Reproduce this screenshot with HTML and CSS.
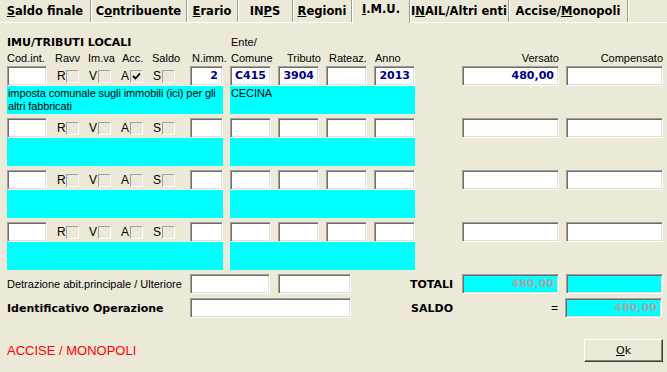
FILE: index.html
```html
<!DOCTYPE html>
<html lang="it">
<head>
    <meta charset="UTF-8">
    <title>F24 - I.M.U.</title>
    <link rel="stylesheet" href="styles.css">
</head>
<body>
    <nav class="tabs">
        <div class="tab"><u>S</u>aldo finale</div>
        <div class="tab">C<u>o</u>ntribuente</div>
        <div class="tab"><u>E</u>rario</div>
        <div class="tab">IN<u>P</u>S</div>
        <div class="tab"><u>R</u>egioni</div>
        <div class="tab active"><u>I</u>.M.U.</div>
        <div class="tab">I<u>N</u>AIL/Altri enti</div>
        <div class="tab">Accise/<u>M</u>onopoli</div>
    </nav>

    <main class="sheet">
        <div class="title-row">
            <span class="section-title">IMU/TRIBUTI LOCALI</span>
            <span>Ente/</span>
        </div>
        <div class="labels">
            <span class="l-cod">Cod.int.</span>
            <span class="l-ravv">Ravv</span>
            <span class="l-imva">Im.va</span>
            <span class="l-acc">Acc.</span>
            <span class="l-saldo">Saldo</span>
            <span class="l-nimm">N.imm.</span>
            <span class="l-com">Comune</span>
            <span class="l-trib">Tributo</span>
            <span class="l-rat">Rateaz.</span>
            <span class="l-anno">Anno</span>
            <span class="l-money">Versato</span>
            <span class="l-money gap">Compensato</span>
        </div>

        <!-- riga 1 -->
        <div class="entry">
            <div class="left">
                <div class="line">
                    <div class="field w-cod"></div>
                    <div class="checks">
                        <span class="chk"><span class="k">R</span><span class="box"></span></span>
                        <span class="chk"><span class="k">V</span><span class="box"></span></span>
                        <span class="chk"><span class="k">A</span><span class="box"><svg width="9" height="9" viewBox="0 0 9 9"><path d="M1 4 L3.5 6.5 L8 1.5" fill="none" stroke="#000" stroke-width="1.8"/></svg></span></span>
                        <span class="chk"><span class="k">S</span><span class="box"></span></span>
                    </div>
                    <div class="field w-nimm val">2</div>
                </div>
                <div class="desc">imposta comunale sugli immobili (ici) per gli altri fabbricati</div>
            </div>
            <div class="mid">
                <div class="line">
                    <div class="field val">C415</div>
                    <div class="field val">3904</div>
                    <div class="field"></div>
                    <div class="field val">2013</div>
                </div>
                <div class="desc">CECINA</div>
            </div>
            <div class="money first"><div class="field val">480,00</div></div>
            <div class="money"><div class="field"></div></div>
        </div>

        <!-- riga 2 -->
        <div class="entry">
            <div class="left">
                <div class="line">
                    <div class="field w-cod"></div>
                    <div class="checks">
                        <span class="chk"><span class="k">R</span><span class="box"></span></span>
                        <span class="chk"><span class="k">V</span><span class="box"></span></span>
                        <span class="chk"><span class="k">A</span><span class="box"></span></span>
                        <span class="chk"><span class="k">S</span><span class="box"></span></span>
                    </div>
                    <div class="field w-nimm"></div>
                </div>
                <div class="desc"></div>
            </div>
            <div class="mid">
                <div class="line">
                    <div class="field"></div>
                    <div class="field"></div>
                    <div class="field"></div>
                    <div class="field"></div>
                </div>
                <div class="desc"></div>
            </div>
            <div class="money first"><div class="field"></div></div>
            <div class="money"><div class="field"></div></div>
        </div>

        <!-- riga 3 -->
        <div class="entry">
            <div class="left">
                <div class="line">
                    <div class="field w-cod"></div>
                    <div class="checks">
                        <span class="chk"><span class="k">R</span><span class="box"></span></span>
                        <span class="chk"><span class="k">V</span><span class="box"></span></span>
                        <span class="chk"><span class="k">A</span><span class="box"></span></span>
                        <span class="chk"><span class="k">S</span><span class="box"></span></span>
                    </div>
                    <div class="field w-nimm"></div>
                </div>
                <div class="desc"></div>
            </div>
            <div class="mid">
                <div class="line">
                    <div class="field"></div>
                    <div class="field"></div>
                    <div class="field"></div>
                    <div class="field"></div>
                </div>
                <div class="desc"></div>
            </div>
            <div class="money first"><div class="field"></div></div>
            <div class="money"><div class="field"></div></div>
        </div>

        <!-- riga 4 -->
        <div class="entry">
            <div class="left">
                <div class="line">
                    <div class="field w-cod"></div>
                    <div class="checks">
                        <span class="chk"><span class="k">R</span><span class="box"></span></span>
                        <span class="chk"><span class="k">V</span><span class="box"></span></span>
                        <span class="chk"><span class="k">A</span><span class="box"></span></span>
                        <span class="chk"><span class="k">S</span><span class="box"></span></span>
                    </div>
                    <div class="field w-nimm"></div>
                </div>
                <div class="desc"></div>
            </div>
            <div class="mid">
                <div class="line">
                    <div class="field"></div>
                    <div class="field"></div>
                    <div class="field"></div>
                    <div class="field"></div>
                </div>
                <div class="desc"></div>
            </div>
            <div class="money first"><div class="field"></div></div>
            <div class="money"><div class="field"></div></div>
        </div>

        <div class="extra">
            <div class="row">
                <span class="row-label">Detrazione abit.principale / Ulteriore</span>
                <div class="field w-detr"></div>
                <div class="field w-ult"></div>
                <span class="tot-label">TOTALI</span>
                <div class="field w-money cyan dim">480,00</div>
                <div class="field w-money cyan next"></div>
            </div>
            <div class="row">
                <span class="row-label strong">Identificativo Operazione</span>
                <div class="field w-ident"></div>
                <span class="tot-label">SALDO</span>
                <span class="equals">=</span>
                <div class="field w-money cyan dim next">480,00</div>
            </div>
        </div>

        <div class="footer">
            <span class="accise">ACCISE / MONOPOLI</span>
            <button class="btn"><u>O</u>k</button>
        </div>
    </main>
</body>
</html>
```

FILE: styles.css
```css
body {
    margin: 0;
    width: 667px;
    height: 372px;
    overflow: hidden;
    background: #ece9d8;
    color: #000;
    font-family: "Liberation Sans", Arial, sans-serif;
    font-size: 11px;
}

/* linguette */
.tabs {
    display: grid;
    grid-template-columns: 91px 96px 51px 55px 59px 58px 99px 119px;
    height: 22px;
    border-bottom: 1px solid #fff;
    font-family: "DejaVu Sans", sans-serif;
    font-weight: bold;
    font-size: 11.5px;
}
.tab {
    line-height: 22px;
    text-align: center;
    white-space: nowrap;
    border-right: 1px solid #9d9d9d;
    box-shadow: 1px 0 0 #fff;
}
.tab.active {
    margin-bottom: -1px;
    line-height: 18px;
    background: #ece9d8;
    border-left: 1px solid #fff;
}

/* intestazione */
.sheet {
    padding: 11px 4px 0 7px;
}
.title-row,
.labels {
    display: flex;
    align-items: center;
    height: 16px;
    white-space: nowrap;
}
.section-title {
    width: 224px;
    font-family: "DejaVu Sans", sans-serif;
    font-weight: bold;
}
.l-cod { width: 48px; }
.l-ravv { width: 33px; }
.l-imva { width: 34px; }
.l-acc { width: 30px; }
.l-saldo { width: 40px; }
.l-nimm { width: 39px; }
.l-com { width: 56px; }
.l-trib { width: 42px; }
.l-rat { width: 46px; }
.l-anno { width: 87px; }
.l-money {
    width: 97px;
    text-align: right;
}
.l-money.gap {
    margin-left: 7px;
}

/* campi */
.field {
    box-sizing: border-box;
    height: 20px;
    background: #fff;
    border: 1px solid;
    border-color: #a0a0a0 #fff #fff #a0a0a0;
    box-shadow: inset 1px 1px 0 #6e6e6e, inset -1px -1px 0 #e2dfd0;
}
.val {
    padding-right: 4px;
    text-align: right;
    line-height: 17px;
    color: #000080;
    font-family: "DejaVu Sans", sans-serif;
    font-weight: bold;
}
.cyan {
    background: #0ff;
}
.dim {
    padding-right: 4px;
    text-align: right;
    line-height: 17px;
    color: #a8a8a8;
    font-family: "DejaVu Sans", sans-serif;
    font-weight: bold;
}

/* righe tributo */
.entry {
    display: flex;
    margin-bottom: 4px;
}
.left {
    width: 216px;
}
.mid {
    width: 185px;
    margin-left: 7px;
}
.money {
    width: 97px;
    margin-left: 7px;
}
.money.first {
    margin-left: 47px;
}
.line {
    display: flex;
    align-items: center;
    height: 20px;
}
.mid .line {
    gap: 7px;
}
.mid .field {
    width: 41px;
}
.w-cod { width: 40px; }
.w-nimm {
    width: 33px;
    margin-left: auto;
}
.checks {
    display: flex;
    margin-left: 10px;
}
.chk {
    display: flex;
    align-items: center;
    width: 32px;
    font-size: 12px;
}
.k {
    width: 9px;
}
.box {
    box-sizing: border-box;
    display: flex;
    align-items: center;
    justify-content: center;
    width: 13px;
    height: 13px;
    border: 1px solid;
    border-color: #a0a0a0 #fff #fff #a0a0a0;
}
.desc {
    box-sizing: border-box;
    height: 28px;
    padding: 1px 0 0 1px;
    line-height: 13px;
    letter-spacing: -0.1px;
    background: #0ff;
}

/* detrazioni e totali */
.extra {
    margin-top: 4px;
}
.row {
    display: flex;
    align-items: center;
    height: 20px;
    margin-bottom: 4px;
    white-space: nowrap;
}
.row-label {
    width: 183px;
}
.row-label.strong {
    font-family: "DejaVu Sans", sans-serif;
    font-weight: bold;
}
.w-detr { width: 80px; }
.w-ult {
    width: 73px;
    margin-left: 8px;
}
.w-ident { width: 161px; }
.w-money { width: 97px; }
.w-money.next {
    margin-left: 7px;
}
.tot-label {
    box-sizing: border-box;
    width: 111px;
    padding-right: 9px;
    text-align: right;
    font-family: "DejaVu Sans", sans-serif;
    font-weight: bold;
}
.equals {
    width: 96px;
    text-align: right;
    font-size: 12px;
}

/* piede */
.footer {
    display: flex;
    align-items: center;
    justify-content: space-between;
    height: 23px;
    margin-top: 21px;
}
.accise {
    color: #f00;
    font-size: 13px;
}
.btn {
    width: 79px;
    height: 23px;
    padding: 0;
    background: #ece9d8;
    border: 1px solid;
    border-color: #fff #404040 #404040 #fff;
    box-shadow: inset -1px -1px 0 #808080;
    font-family: "DejaVu Sans", sans-serif;
    font-size: 11px;
    color: #000;
}
```
